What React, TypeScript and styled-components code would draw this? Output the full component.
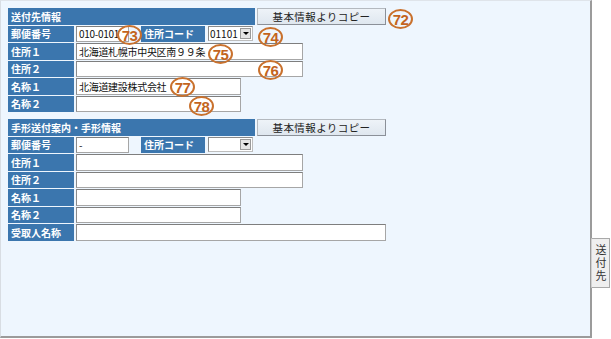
import React from "react";
import styled, { createGlobalStyle } from "styled-components";

const GlobalStyle = createGlobalStyle`
  html, body {
    margin: 0;
    padding: 0;
    background: #ffffff;
  }
  body {
    font-family: "Noto Sans CJK JP", "Liberation Sans", sans-serif;
  }
`;

const Page = styled.div`
  display: flex;
  align-items: flex-start;
  width: 611px;
  height: 339px;
`;

const Panel = styled.div`
  position: relative;
  box-sizing: border-box;
  width: 592px;
  height: 338px;
  padding: 7px 0 0 7px;
  background: #eef6fe;
  border-top: 1px solid #dfe4ea;
  border-left: 1px solid #d8dde3;
  border-right: 2px solid #9b9b9b;
  border-bottom: 2px solid #9b9b9b;
`;

const Section = styled.div`
  display: flex;
  flex-direction: column;
  gap: 1px;
  margin-bottom: 7px;
`;

const Row = styled.div`
  display: flex;
  align-items: stretch;
  gap: 2px;
  height: 16.5px;
`;

const HeaderCell = styled.div`
  width: 247px;
  background: #3b76ae;
  color: #ffffff;
  font-size: 10px;
  font-weight: 700;
  padding-left: 3px;
  box-sizing: border-box;
  display: flex;
  align-items: center;
`;

const CopyButton = styled.div`
  width: 129px;
  box-sizing: border-box;
  background: linear-gradient(#eef3f8, #dfe7ef);
  border: 1px solid #8b9098;
  border-top-color: #b4b9bf;
  border-left-color: #b4b9bf;
  color: #222222;
  font-size: 10.5px;
  letter-spacing: 0.4px;
  display: flex;
  align-items: center;
  justify-content: center;
`;

const Label = styled.div<{ $w?: number }>`
  width: ${(p) => p.$w ?? 66}px;
  flex-shrink: 0;
  background: #3b76ae;
  color: #ffffff;
  font-size: 10px;
  font-weight: 700;
  padding-left: 3px;
  box-sizing: border-box;
  display: flex;
  align-items: center;
  white-space: nowrap;
`;

const Field = styled.div<{ $w: number }>`
  width: ${(p) => p.$w}px;
  flex-shrink: 0;
  box-sizing: border-box;
  background: #ffffff;
  border: 1px solid #a6a6a6;
  border-top-color: #7e7e7e;
  border-left-color: #8c8c8c;
  color: #111111;
  font-size: 10px;
  letter-spacing: -0.3px;
  padding-left: 2px;
  display: flex;
  align-items: center;
  white-space: nowrap;
  overflow: hidden;
`;

const PostalCell = styled.div`
  width: 63px;
  display: flex;
`;

const Select = styled.div`
  width: 45px;
  height: 15px;
  margin-left: 1px;
  align-self: center;
  box-sizing: border-box;
  background: #ffffff;
  border: 1px solid #8a8a8a;
  border-right-color: #bdbdbd;
  border-bottom-color: #bdbdbd;
  display: flex;
  align-items: center;
  justify-content: space-between;
  font-size: 10px;
  color: #111111;
  padding-left: 1px;
`;

const DropButton = styled.div`
  width: 11px;
  height: 11px;
  margin-right: 1px;
  box-sizing: border-box;
  background: #e4e4e4;
  border: 1px solid #9a9a9a;
  display: flex;
  align-items: center;
  justify-content: center;

  &::after {
    content: "";
    border-left: 3px solid transparent;
    border-right: 3px solid transparent;
    border-top: 3px solid #000000;
  }
`;

const Marker = styled.div<{ $x: number; $y: number }>`
  position: absolute;
  left: ${(p) => p.$x}px;
  top: ${(p) => p.$y}px;
  width: 25px;
  height: 20px;
  box-sizing: border-box;
  border: 2px solid #c9712d;
  border-radius: 50%;
  color: #c3641d;
  font-family: "Liberation Sans", Arial, sans-serif;
  font-weight: 700;
  font-size: 15px;
  letter-spacing: -0.5px;
  display: flex;
  align-items: center;
  justify-content: center;
`;

const Tab = styled.div`
  margin-top: 238px;
  margin-left: -1px;
  width: 19px;
  height: 50px;
  box-sizing: border-box;
  background: #efefef;
  border: 1px solid #a9a9a9;
  border-left-color: #d0d0d0;
  color: #333333;
  font-size: 11px;
  line-height: 1;
  letter-spacing: 2px;
  writing-mode: vertical-rl;
  display: flex;
  align-items: center;
  justify-content: center;
  position: relative;
`;

const markers = [
  { n: 72, x: 387, y: 8 },
  { n: 73, x: 116, y: 24 },
  { n: 74, x: 257, y: 26 },
  { n: 75, x: 207, y: 43 },
  { n: 76, x: 257, y: 59 },
  { n: 77, x: 169, y: 76 },
  { n: 78, x: 188, y: 95 },
];

const App: React.FC = () => {
  return (
    <>
      <GlobalStyle />
      <Page>
        <Panel>
          <Section>
            <Row>
              <HeaderCell>送付先情報</HeaderCell>
              <CopyButton>基本情報よりコピー</CopyButton>
            </Row>
            <Row>
              <Label>郵便番号</Label>
              <PostalCell>
                <Field $w={53}>010-0101</Field>
              </PostalCell>
              <Label $w={64}>住所コード</Label>
              <Select>
                01101
                <DropButton />
              </Select>
            </Row>
            <Row>
              <Label>住所１</Label>
              <Field $w={227}>北海道札幌市中央区南９９条</Field>
            </Row>
            <Row>
              <Label>住所２</Label>
              <Field $w={227} />
            </Row>
            <Row>
              <Label>名称１</Label>
              <Field $w={165}>北海道建設株式会社</Field>
            </Row>
            <Row>
              <Label>名称２</Label>
              <Field $w={165} />
            </Row>
          </Section>

          <Section>
            <Row>
              <HeaderCell>手形送付案内・手形情報</HeaderCell>
              <CopyButton>基本情報よりコピー</CopyButton>
            </Row>
            <Row>
              <Label>郵便番号</Label>
              <PostalCell>
                <Field $w={53}>-</Field>
              </PostalCell>
              <Label $w={64}>住所コード</Label>
              <Select>
                <span />
                <DropButton />
              </Select>
            </Row>
            <Row>
              <Label>住所１</Label>
              <Field $w={227} />
            </Row>
            <Row>
              <Label>住所２</Label>
              <Field $w={227} />
            </Row>
            <Row>
              <Label>名称１</Label>
              <Field $w={165} />
            </Row>
            <Row>
              <Label>名称２</Label>
              <Field $w={165} />
            </Row>
            <Row>
              <Label>受取人名称</Label>
              <Field $w={310} />
            </Row>
          </Section>

          {markers.map((m) => (
            <Marker key={m.n} $x={m.x} $y={m.y}>
              {m.n}
            </Marker>
          ))}
        </Panel>
        <Tab>送付先</Tab>
      </Page>
    </>
  );
};

export default App;
